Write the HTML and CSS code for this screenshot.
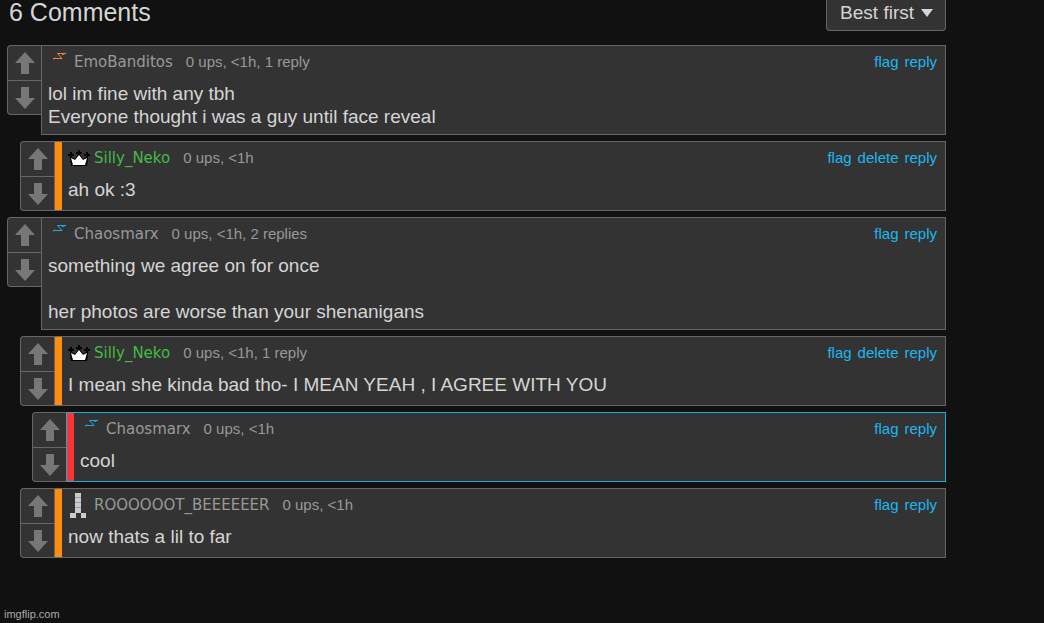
FILE: index.html
```
<!DOCTYPE html>
<html lang="en">

<head>
    <meta charset="UTF-8">
    <title>6 Comments</title>
    <link rel="stylesheet" href="styles.css">
</head>

<body>
    <!-- shared icons -->
    <svg class="sprite" aria-hidden="true">
        <symbol id="arrow-up" viewBox="0 0 20 22">
            <path d="M10 0L20 11H14V22H6V11H0Z" />
        </symbol>
        <symbol id="arrow-down" viewBox="0 0 20 22">
            <path d="M10 22L20 11H14V0H6V11H0Z" />
        </symbol>
        <symbol id="bolt" viewBox="0 0 22 26">
            <path d="M5 9.500H14L9.500 4.500H18M8 9L5 10M18 4L14 6" />
        </symbol>
        <symbol id="crown" viewBox="0 0 22 26">
            <path fill="#000" d="M10 5h2v2h2v2h-2l3 5 3-2v-1h-2v-2h2V7h2v2h2v2h-2v3l-1 7H3l-1-7v-3H0V9h2V7h2v2h2v2H4v1l3 2 3-5H8V7h2z" />
            <path fill="#fff" d="M3 13l4 2 4-5 4 5 4-2-2 7H5z" />
        </symbol>
        <symbol id="tower" viewBox="0 0 22 26">
            <path d="M7 1h6v20h5v5h-5v-5H8v5H2v-5h5z" />
            <path class="seams" d="M7 5.500h6M7 10.500h6M7 15.500h6" />
        </symbol>
    </svg>

    <main class="comments">
        <div class="top">
            <h1>6 Comments</h1>
            <button class="sort">Best first <span class="caret"></span></button>
        </div>

        <div class="comment">
            <div class="votes">
                <button aria-label="upvote"><svg><use href="#arrow-up" /></svg></button>
                <button aria-label="downvote"><svg><use href="#arrow-down" /></svg></button>
            </div>
            <div class="box">
                <div class="head">
                    <svg class="icon bolt orange"><use href="#bolt" /></svg>
                    <a class="user" href="#">EmoBanditos</a>
                    <span class="meta">0 ups, &lt;1h, 1 reply</span>
                    <div class="links"><a href="#">flag</a><a href="#">reply</a></div>
                </div>
                <p>lol im fine with any tbh<br>Everyone thought i was a guy until face reveal</p>
            </div>
        </div>

        <div class="comment level1">
            <div class="votes">
                <button aria-label="upvote"><svg><use href="#arrow-up" /></svg></button>
                <button aria-label="downvote"><svg><use href="#arrow-down" /></svg></button>
            </div>
            <div class="box">
                <div class="head">
                    <svg class="icon"><use href="#crown" /></svg>
                    <a class="user green" href="#">Silly_Neko</a>
                    <span class="meta">0 ups, &lt;1h</span>
                    <div class="links"><a href="#">flag</a><a href="#">delete</a><a href="#">reply</a></div>
                </div>
                <p>ah ok :3</p>
            </div>
        </div>

        <div class="comment">
            <div class="votes">
                <button aria-label="upvote"><svg><use href="#arrow-up" /></svg></button>
                <button aria-label="downvote"><svg><use href="#arrow-down" /></svg></button>
            </div>
            <div class="box">
                <div class="head">
                    <svg class="icon bolt blue"><use href="#bolt" /></svg>
                    <a class="user" href="#">Chaosmarx</a>
                    <span class="meta">0 ups, &lt;1h, 2 replies</span>
                    <div class="links"><a href="#">flag</a><a href="#">reply</a></div>
                </div>
                <p>something we agree on for once<br><br>her photos are worse than your shenanigans</p>
            </div>
        </div>

        <div class="comment level1">
            <div class="votes">
                <button aria-label="upvote"><svg><use href="#arrow-up" /></svg></button>
                <button aria-label="downvote"><svg><use href="#arrow-down" /></svg></button>
            </div>
            <div class="box">
                <div class="head">
                    <svg class="icon"><use href="#crown" /></svg>
                    <a class="user green" href="#">Silly_Neko</a>
                    <span class="meta">0 ups, &lt;1h, 1 reply</span>
                    <div class="links"><a href="#">flag</a><a href="#">delete</a><a href="#">reply</a></div>
                </div>
                <p>I mean she kinda bad tho- I MEAN YEAH , I AGREE WITH YOU</p>
            </div>
        </div>

        <div class="comment level2 selected">
            <div class="votes">
                <button aria-label="upvote"><svg><use href="#arrow-up" /></svg></button>
                <button aria-label="downvote"><svg><use href="#arrow-down" /></svg></button>
            </div>
            <div class="box">
                <div class="head">
                    <svg class="icon bolt blue"><use href="#bolt" /></svg>
                    <a class="user" href="#">Chaosmarx</a>
                    <span class="meta">0 ups, &lt;1h</span>
                    <div class="links"><a href="#">flag</a><a href="#">reply</a></div>
                </div>
                <p>cool</p>
            </div>
        </div>

        <div class="comment level1">
            <div class="votes">
                <button aria-label="upvote"><svg><use href="#arrow-up" /></svg></button>
                <button aria-label="downvote"><svg><use href="#arrow-down" /></svg></button>
            </div>
            <div class="box">
                <div class="head">
                    <svg class="icon tower"><use href="#tower" /></svg>
                    <a class="user" href="#">ROOOOOOT_BEEEEEER</a>
                    <span class="meta">0 ups, &lt;1h</span>
                    <div class="links"><a href="#">flag</a><a href="#">reply</a></div>
                </div>
                <p>now thats a lil to far</p>
            </div>
        </div>
    </main>

    <footer>imgflip.com</footer>
</body>

</html>
```
FILE: styles.css
```
* {
    margin: 0;
    padding: 0;
    box-sizing: border-box;
}

body {
    display: flex;
    flex-direction: column;
    min-height: 100vh;
    background-color: #111;
    color: #d5d5d5;
    font-family: "Liberation Sans", Arial, sans-serif;
}

a {
    text-decoration: none;
}

.sprite {
    display: none;
}

.comments {
    flex: 1;
    padding: 0 98px 0 7px;
}

.top {
    display: flex;
    justify-content: space-between;
    align-items: flex-start;
    height: 45px;
}

.top h1 {
    padding-left: 2px;
    font-size: 25px;
    font-weight: normal;
    line-height: 24px;
}

.sort {
    display: flex;
    align-items: center;
    gap: 7px;
    height: 31px;
    padding: 0 12px 5px 13px;
    border: 1px solid #666;
    border-top: 0;
    border-radius: 0 0 4px 4px;
    background-color: #333;
    color: #d5d5d5;
    font-family: inherit;
    font-size: 19px;
}

.caret {
    border: 6px solid transparent;
    border-top: 8px solid #d5d5d5;
    border-bottom: 0;
}

.comment {
    display: flex;
    align-items: flex-start;
    margin-bottom: 6px;
}

.level1 {
    margin-left: 13px;
}

.level2 {
    margin-left: 25px;
}

/* vote buttons */
.votes {
    width: 34px;
    height: 70px;
    border: 1px solid #666;
    border-right: 0;
    border-radius: 4px 0 0 4px;
    background-color: #333;
}

.votes button {
    display: flex;
    align-items: center;
    justify-content: center;
    width: 100%;
    height: 34px;
    border: 0;
    background: none;
}

.votes button + button {
    border-top: 1px solid #666;
}

.votes svg {
    width: 20px;
    height: 22px;
    fill: #777;
}

.box {
    flex: 1;
    min-height: 70px;
    padding: 3px 8px 6px 6px;
    border: 1px solid #666;
    background-color: #333;
}

.level1 .box {
    box-shadow: inset 7px 0 #ff8c0a;
    padding-left: 13px;
}

.level2 .box {
    box-shadow: inset 7px 0 #ff3333;
    padding-left: 13px;
}

.selected .box {
    border-color: #12b0dc;
}

.head {
    display: flex;
    align-items: baseline;
    height: 26px;
    margin-bottom: 7px;
    font-size: 15px;
    line-height: 26px;
}

.icon {
    align-self: center;
    width: 22px;
    height: 26px;
    margin-right: 4px;
}

.bolt {
    fill: none;
    stroke-width: 1;
}

.orange {
    stroke: #f48434;
}

.blue {
    stroke: #22a7e8;
}

.tower {
    fill: #ccc;
}

.seams {
    stroke: #999;
}

.user {
    margin-right: 13px;
    color: #999;
    font-family: "DejaVu Sans", Verdana, sans-serif;
}

.green {
    color: #4b4;
}

.meta {
    color: #999;
}

.links {
    display: flex;
    gap: 6px;
    margin-left: auto;
}

.links a {
    color: #1cb7f0;
}

.box p {
    font-size: 19px;
    line-height: 23px;
}

footer {
    padding: 0 4px 3px;
    color: #aaa;
    font-size: 11px;
}
```
